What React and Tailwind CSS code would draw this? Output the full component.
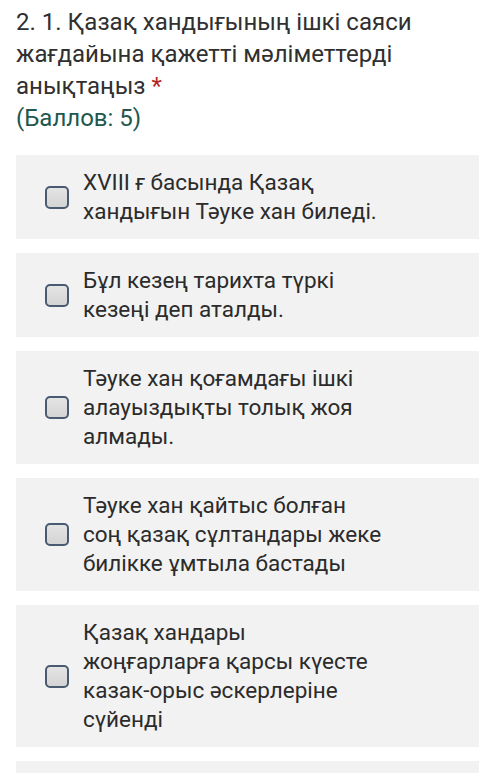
import React from 'react';

// each option is kept as the lines the screen shows
const options = [
  ['XVIII ғ басында Қазақ', 'хандығын Тәуке хан биледі.'],
  ['Бұл кезең тарихта түркі', 'кезеңі деп аталды.'],
  ['Тәуке хан қоғамдағы ішкі', 'алауыздықты толық жоя', 'алмады.'],
  ['Тәуке хан қайтыс болған', 'соң қазақ сұлтандары жеке', 'билікке ұмтыла бастады'],
  ['Қазақ хандары', 'жоңғарларға қарсы күесте', 'казак-орыс әскерлеріне', 'сүйенді'],
  [],
];

const Option = ({ lines }) => (
  <div className="flex items-center bg-[#f2f2f2] py-[13px] pl-[29px] min-h-[84px]">
    <span className="w-[24px] h-[23px] shrink-0 rounded-[5px] border-2 border-[#4a5a70] bg-gradient-to-b from-[#e4e4e4] to-[#d4d4d4]"></span>
    <p className="ml-[14px] w-[330px] text-[22.5px] leading-[29px] text-[#2b2b2b]">
      {lines.map((line, i) => (
        <span key={i} className="block whitespace-nowrap">{line}</span>
      ))}
    </p>
  </div>
);

const App = () => {
  return (
    <div className="bg-white px-[16px] pt-[6px] font-['Roboto',sans-serif] overflow-hidden h-[773px]">
      <header>
        <h1 className="text-[24px] leading-[32px] text-[#303030]">
          2. 1. Қазақ хандығының ішкі саяси жағдайына қажетті мәліметтерді анықтаңыз{' '}
          <span className="text-[#b3261e]">*</span>
        </h1>
        <p className="text-[24px] leading-[32px] text-[#21574c]">(Баллов: 5)</p>
      </header>

      <div className="mt-[21px] flex flex-col gap-[14px] w-[463px]">
        {options.map((lines, i) => (
          <Option key={i} lines={lines} />
        ))}
      </div>
    </div>
  );
};

export default App;
